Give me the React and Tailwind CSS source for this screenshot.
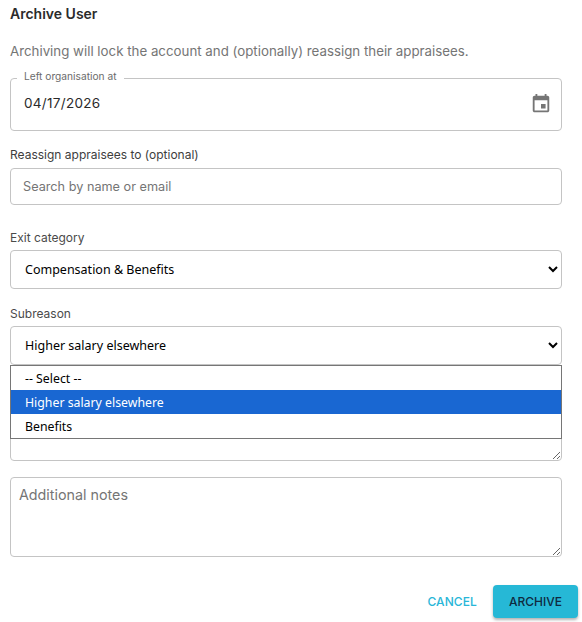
import React from "react";

const boxClass = "w-full rounded border border-[#c4c4c4] bg-white";

function App() {
  return (
    <div className="w-[582px] h-[622px] overflow-hidden bg-white pl-[10px] pr-[20px] pt-[5px] font-['Inter',sans-serif] text-[#1f1f1f]">
      <h2 className="text-[14px] leading-[18px] font-semibold text-[#2b2b2b]">Archive User</h2>
      <p className="mt-[18px] text-[13.3px] leading-[20px] text-[#757575]">
        Archiving will lock the account and (optionally) reassign their appraisees.
      </p>

      {/* date field with notched label */}
      <div className={`relative mt-[17px] h-[53px] ${boxClass} flex items-center justify-between pl-[13px] pr-[9px] pb-[2px]`}>
        <span className="absolute left-[6px] -top-[10px] bg-white px-[7px] text-[10.2px] leading-[14px] text-[#6b6b6b]">
          Left organisation at
        </span>
        <span className="text-[13.5px] tracking-[0.3px] text-[#2a2a2a]">04/17/2026</span>
        <svg width="22" height="22" viewBox="0 0 24 24" fill="#757575">
          <path d="M17 12h-5v5h5v-5zM16 1v2H8V1H6v2H5c-1.11 0-1.99.9-1.99 2L3 19c0 1.1.89 2 2 2h14c1.1 0 2-.9 2-2V5c0-1.1-.9-2-2-2h-1V1h-2zm3 18H5V8h14v11z" />
        </svg>
      </div>

      <label className="mt-[16px] block text-[12px] leading-[16px] text-[#3d3d3d]">Reassign appraisees to (optional)</label>
      <input
        className={`mt-[5px] block h-[37px] px-[12px] text-[12.7px] outline-none placeholder:text-[#757575] ${boxClass}`}
        placeholder="Search by name or email"
      />

      <label className="mt-[25px] block text-[12px] leading-[16px] text-[#4a4a4a]">Exit category</label>
      <select
        defaultValue="comp"
        className={`mt-[4px] block h-[39px] px-[10px] font-['Noto_Sans',sans-serif] text-[12.5px] text-black outline-none ${boxClass}`}
      >
        <option value="comp">Compensation &amp; Benefits</option>
      </select>

      <label className="mt-[17px] block text-[12px] leading-[16px] text-[#4a4a4a]">Subreason</label>
      <div className="relative mt-[4px]">
        <select
          defaultValue="higher"
          className={`block h-[39px] px-[10px] font-['Noto_Sans',sans-serif] text-[12.5px] text-black outline-none ${boxClass}`}
        >
          <option value="higher">Higher salary elsewhere</option>
        </select>

        {/* open select popup */}
        <ul className="absolute left-0 right-0 top-[39px] z-10 border border-[#767676] bg-white font-['Noto_Sans',sans-serif] text-[12.3px] text-black">
          <li className="h-[24px] pl-[14px] pt-[1px] leading-[24px]">-- Select --</li>
          <li className="h-[24px] bg-[#1967d2] pl-[14px] pt-[1px] leading-[24px] text-white">Higher salary elsewhere</li>
          <li className="h-[24px] pl-[14px] pt-[1px] leading-[24px]">Benefits</li>
        </ul>

        <textarea className={`mt-[16px] block h-[80px] px-[8px] py-[6px] text-[14px] outline-none ${boxClass}`} />
      </div>

      <textarea
        className={`mt-[16px] block h-[80px] px-[8px] py-[6px] text-[14.3px] outline-none placeholder:text-[#757575] ${boxClass}`}
        placeholder="Additional notes"
      />

      <div className="mt-[28px] -mr-[16px] flex items-center justify-end gap-[8px]">
        <button className="h-[33px] px-[8px] text-[12px] font-medium tracking-[0.1px] text-[#29b6d8]">CANCEL</button>
        <button className="h-[33px] w-[85px] rounded bg-[#26b8d6] text-[12px] font-medium text-[#0f2a40] shadow-[0_2px_3px_rgba(0,0,0,0.3)]">
          ARCHIVE
        </button>
      </div>
    </div>
  );
}

export default App;
